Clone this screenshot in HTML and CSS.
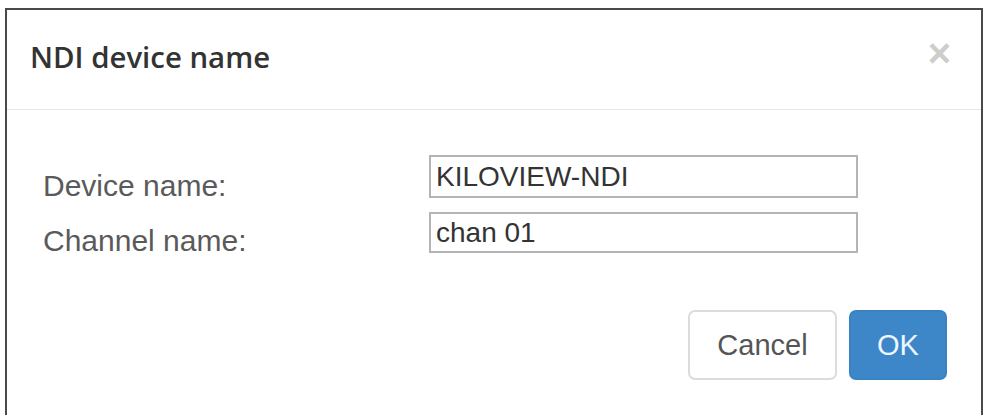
FILE: index.html
```html
<!DOCTYPE html>
<html lang="en">
<head>
    <meta charset="UTF-8">
    <meta name="viewport" content="width=device-width, initial-scale=1.0">
    <title>NDI device name</title>
    <link rel="stylesheet" href="styles.css">
</head>
<body>
    <div class="modal">
        <div class="modal-header">
            <h4 class="modal-title">NDI device name</h4>
            <button type="button" class="close">&times;</button>
        </div>

        <div class="modal-body">
            <div class="form-row">
                <label for="device-name">Device name:</label>
                <input type="text" id="device-name" class="first" value="KILOVIEW-NDI">
            </div>
            <div class="form-row">
                <label for="channel-name">Channel name:</label>
                <input type="text" id="channel-name" value="chan 01">
            </div>
        </div>

        <div class="modal-footer">
            <button type="button" class="btn btn-default">Cancel</button>
            <button type="button" class="btn btn-primary">OK</button>
        </div>
    </div>
</body>
</html>
```

FILE: styles.css
```css
/* General Reset */
body {
    margin: 0;
    padding: 8px 1px 0 5px;
    font-family: "Liberation Sans", Arial, sans-serif;
    background-color: #ffffff;
    color: #333;
    overflow: hidden;
}

/* Dialog */
.modal {
    border: 2px solid #4a4a4a;
    height: 410px;
    box-sizing: border-box;
    background-color: #fff;
}

.modal-header {
    display: flex;
    align-items: center;
    justify-content: space-between;
    height: 99px;
    padding: 0 24px 0 23px;
    border-bottom: 1px solid #e6e6e6;
}

.modal-title {
    margin: 0 0 6px 0;
    font-family: "Open Sans", sans-serif;
    font-weight: 600;
    font-size: 29.4px;
    color: #333;
}

.close {
    background: none;
    border: none;
    padding: 0;
    margin: 0 6px 14px 0;
    font-family: "Liberation Sans", Arial, sans-serif;
    font-size: 40px;
    font-weight: bold;
    line-height: 1;
    color: #cdcdcd;
    cursor: pointer;
}

/* Form */
.modal-body {
    padding: 45px 0 0 36px;
    display: flex;
    flex-direction: column;
    gap: 14px;
}

.form-row {
    display: flex;
    align-items: flex-end;
}

.form-row label {
    width: 386px;
    margin-bottom: -3px;
    font-size: 30px;
    line-height: 1;
    color: #5a5a5a;
}

.form-row input {
    width: 429px;
    height: 41px;
    box-sizing: border-box;
    border: 2px solid #b4b4b4;
    padding: 0 5px;
    font-family: "Liberation Sans", Arial, sans-serif;
    font-size: 28px;
    color: #333;
    outline: none;
}

.form-row input.first {
    height: 43px;
}

/* Footer */
.modal-footer {
    display: flex;
    justify-content: flex-end;
    gap: 12px;
    padding: 57px 34px 0 0;
}

.btn {
    height: 70px;
    border-radius: 7px;
    font-family: "Liberation Sans", Arial, sans-serif;
    font-size: 29px;
    cursor: pointer;
}

.btn-default {
    width: 149px;
    background-color: #fff;
    border: 2px solid #dcdcdc;
    color: #555;
}

.btn-primary {
    width: 98px;
    background-color: #3d87c9;
    border: 2px solid #3a83c2;
    color: #eef6ff;
}
```
